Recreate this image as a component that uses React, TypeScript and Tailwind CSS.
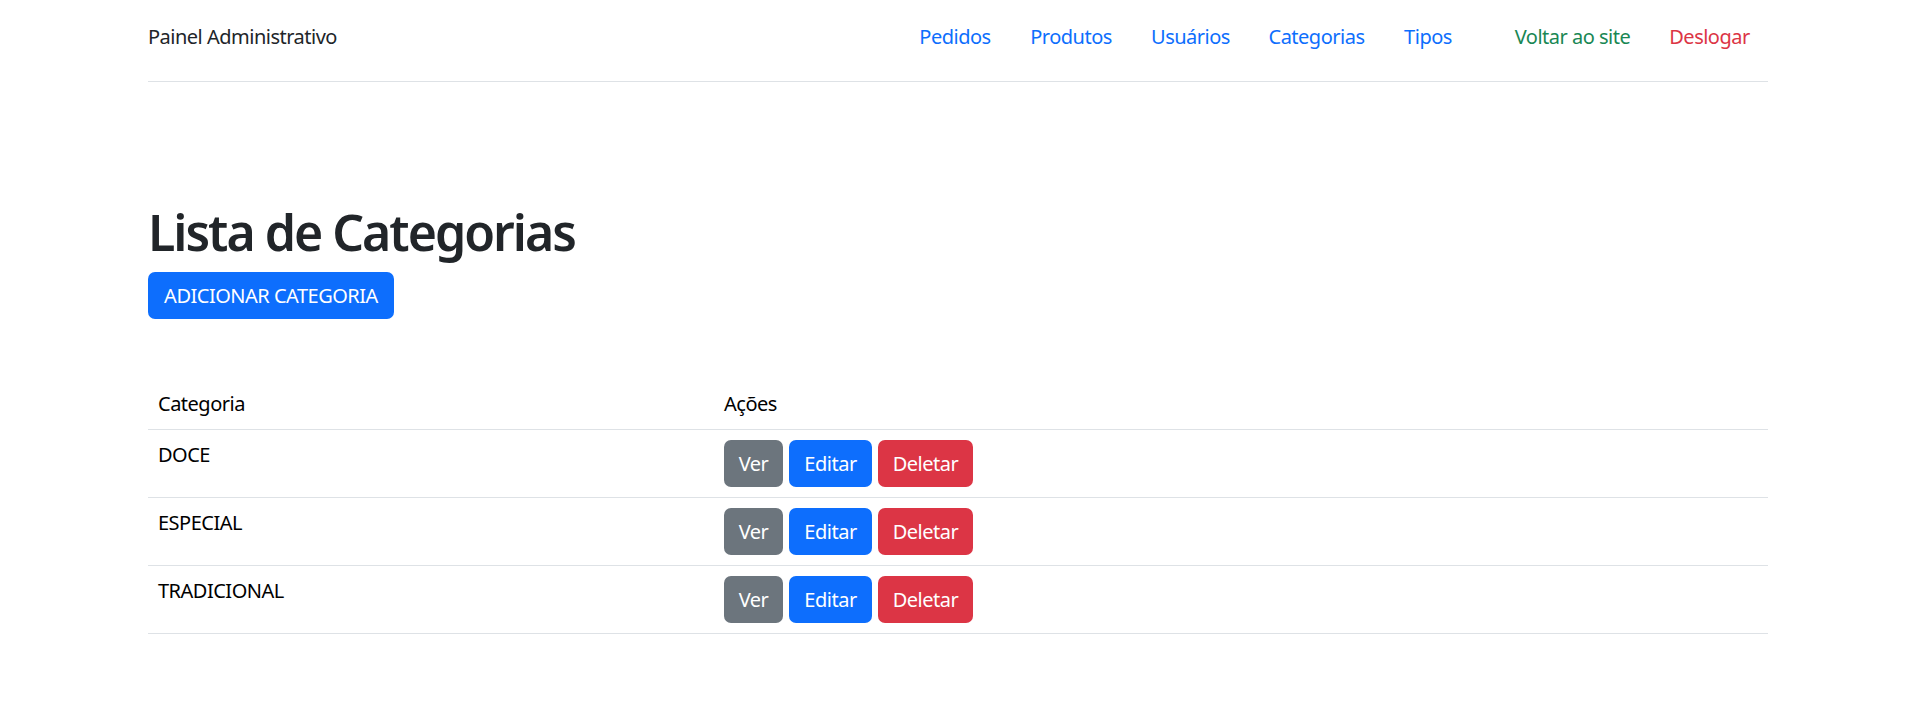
import React from 'react';

type NavLink = { label: string; width: string; color: string };

const navLinks: NavLink[] = [
  { label: 'Pedidos', width: 'w-[110px]', color: 'text-[#0d6efd]' },
  { label: 'Produtos', width: 'w-[122px]', color: 'text-[#0d6efd]' },
  { label: 'Usuários', width: 'w-[117px]', color: 'text-[#0d6efd]' },
  { label: 'Categorias', width: 'w-[135px]', color: 'text-[#0d6efd]' },
  { label: 'Tipos', width: 'w-[88px]', color: 'text-[#0d6efd]' },
];

const categories = ['DOCE', 'ESPECIAL', 'TRADICIONAL'];

const Header: React.FC = () => (
  <header className="flex h-[82px] items-start border-b border-[#dee2e6] pt-[22px]">
    <span className="text-[#212529]">Painel Administrativo</span>
    <nav className="ml-auto flex">
      {navLinks.map((link) => (
        <a key={link.label} href="#" className={`${link.width} ${link.color} text-center`}>
          {link.label}
        </a>
      ))}
      <span className="w-[22px]" />
      <a href="#" className="w-[157px] text-center text-[#198754]">
        Voltar ao site
      </a>
      <a href="#" className="w-[117px] text-center text-[#dc3545]">
        Deslogar
      </a>
    </nav>
  </header>
);

const CategoryRow: React.FC<{ name: string }> = ({ name }) => (
  <div className="grid grid-cols-[566px_1fr] border-b border-[#dee2e6]">
    <div className="px-[10px] py-[10px] text-black">{name}</div>
    <div className="flex gap-[6px] px-[10px] py-[10px]">
      <button type="button" className="h-[47px] w-[59px] rounded-[7px] bg-[#6c757d] text-center text-white">
        Ver
      </button>
      <button type="button" className="h-[47px] w-[83px] rounded-[7px] bg-[#0d6efd] text-center text-white">
        Editar
      </button>
      <button type="button" className="h-[47px] w-[95px] rounded-[7px] bg-[#dc3545] text-center text-white">
        Deletar
      </button>
    </div>
  </div>
);

export default function App() {
  return (
    <div
      className="min-h-[721px] bg-white text-[20px] leading-[30px] tracking-[-0.5px] text-[#212529]"
      style={{ fontFamily: '"Noto Sans", "Open Sans", sans-serif' }}
    >
      <div className="ml-[148px] w-[1620px]">
        <Header />

        <h1 className="mt-[118px] text-[50px] leading-[64px] font-semibold tracking-[-2px] text-[#212529]">
          Lista de Categorias
        </h1>
        <button
          type="button"
          className="mt-[8px] h-[47px] w-[246px] rounded-[7px] bg-[#0d6efd] text-center text-white"
        >
          ADICIONAR CATEGORIA
        </button>

        <div className="mt-[60px]">
          <div className="grid grid-cols-[566px_1fr] border-b border-[#dee2e6] text-black">
            <div className="px-[10px] py-[10px]">Categoria</div>
            <div className="px-[10px] py-[10px]">Ações</div>
          </div>
          {categories.map((name) => (
            <CategoryRow key={name} name={name} />
          ))}
        </div>
      </div>
    </div>
  );
}
